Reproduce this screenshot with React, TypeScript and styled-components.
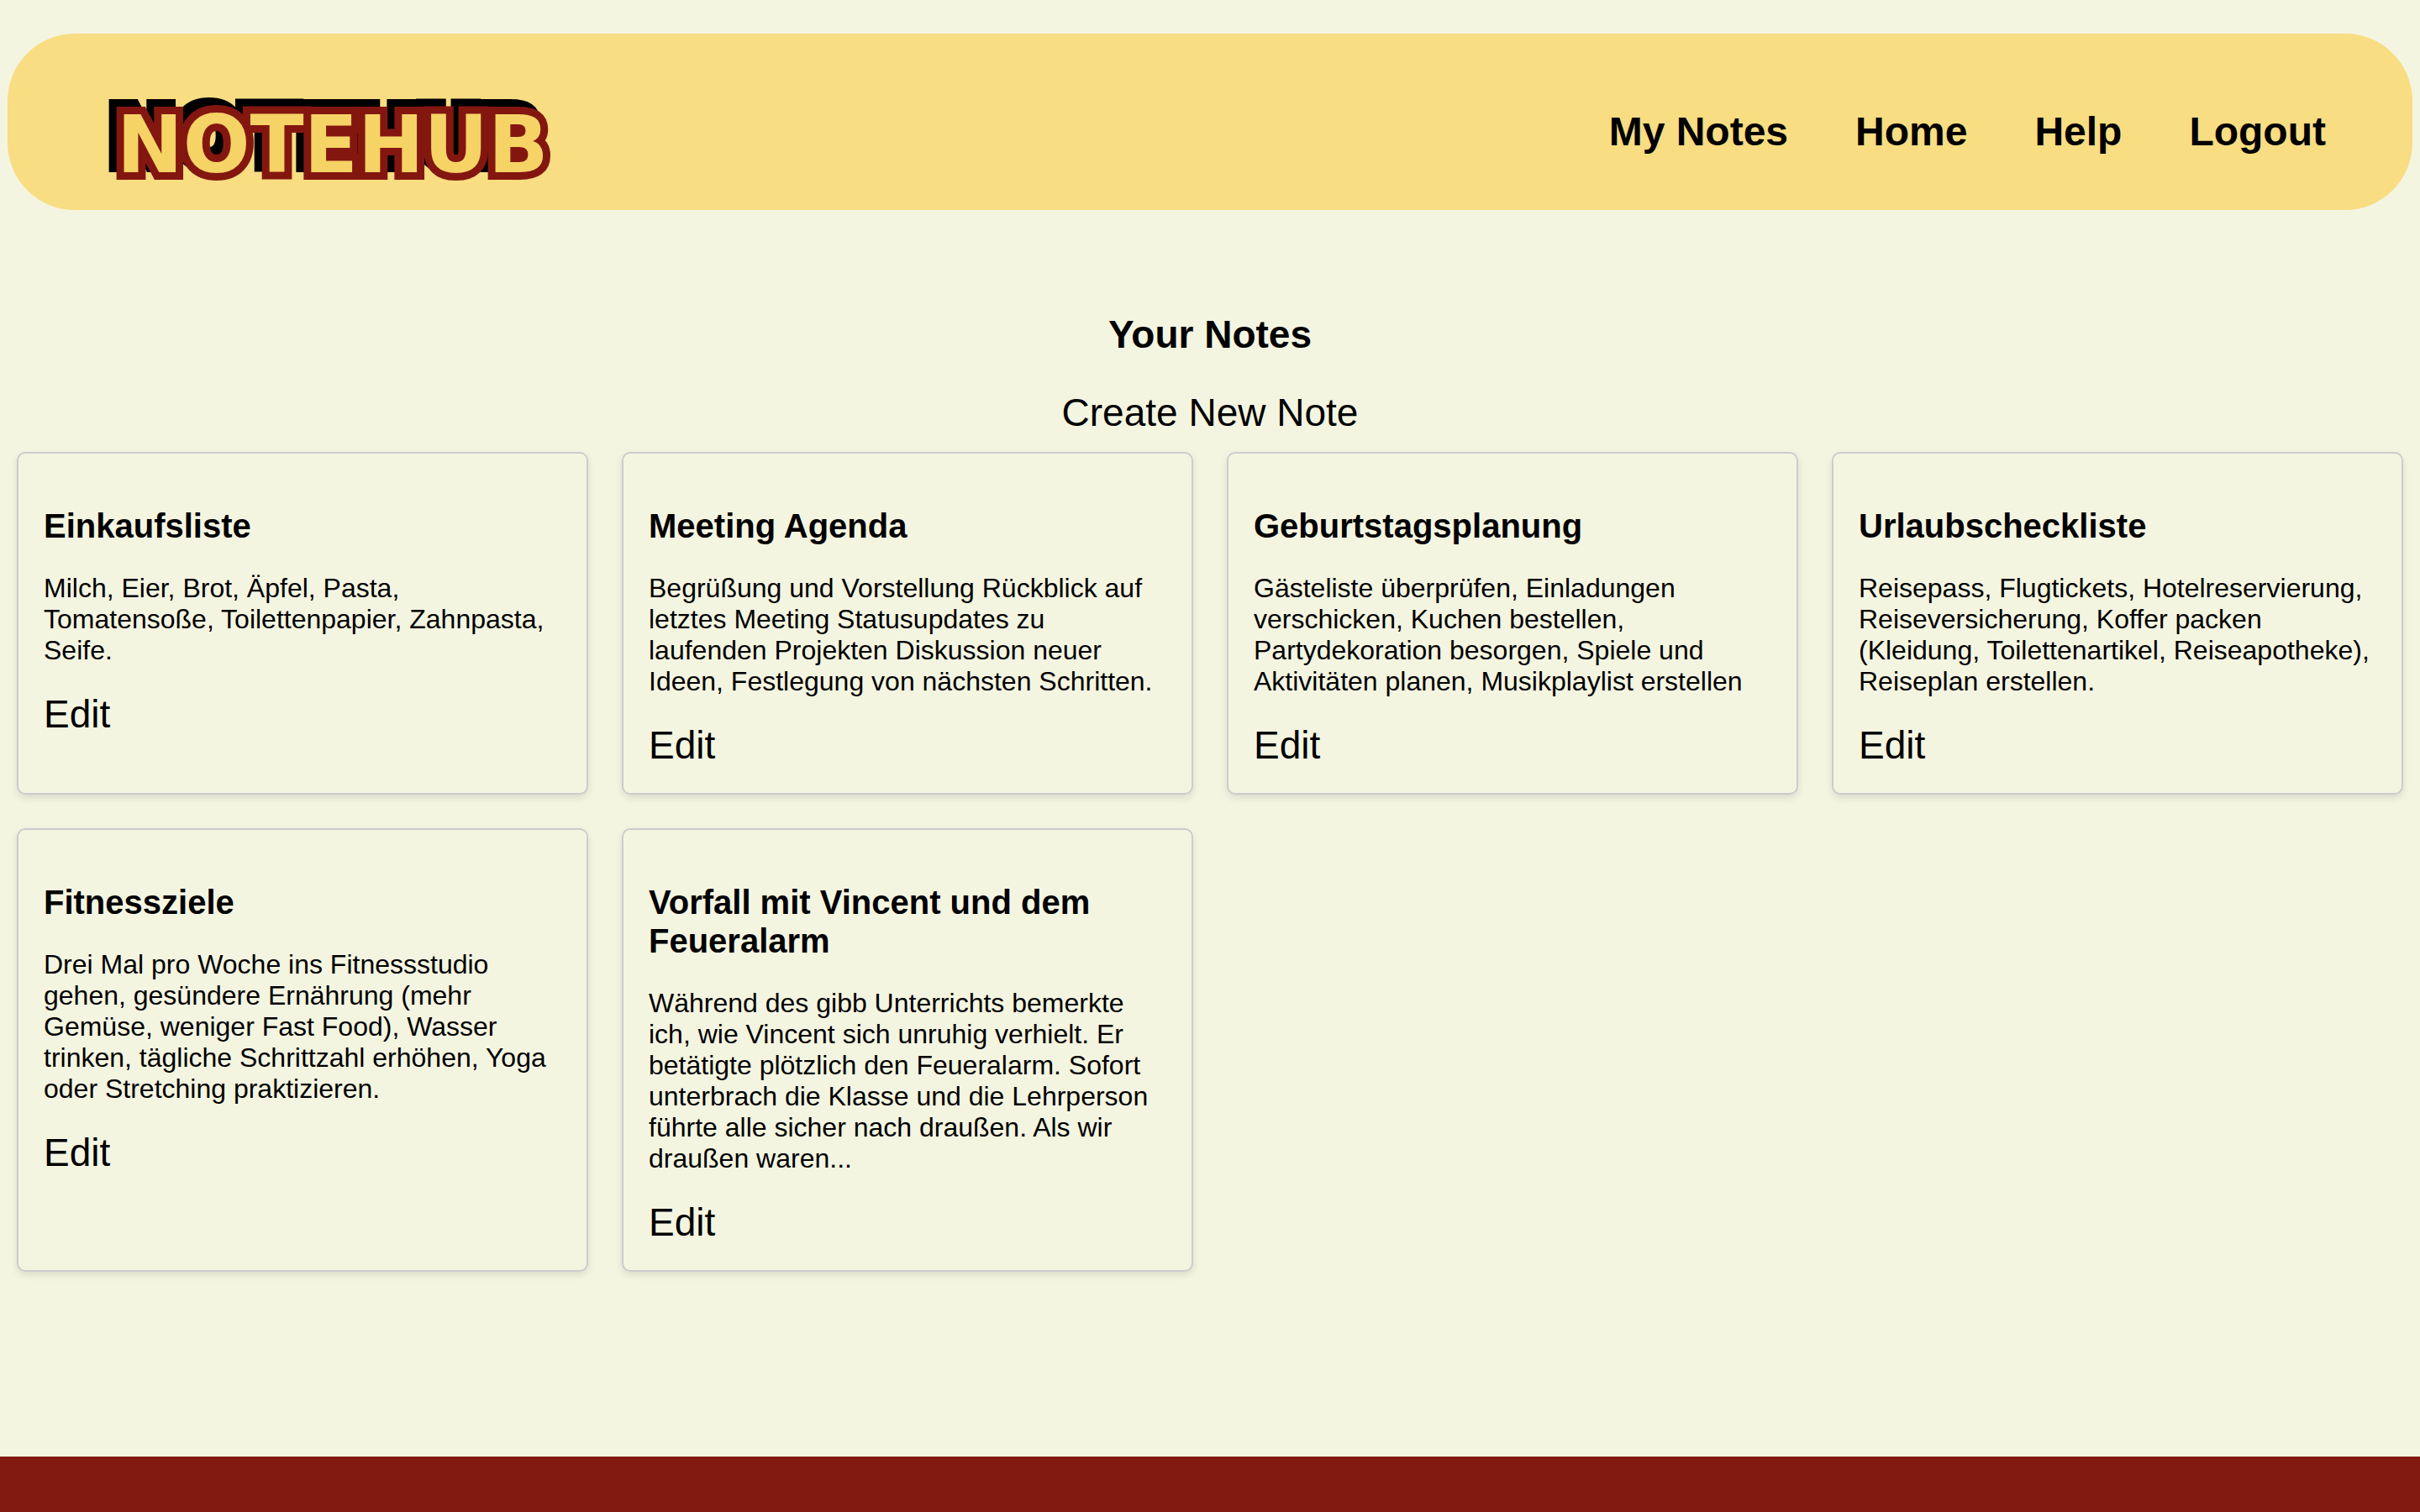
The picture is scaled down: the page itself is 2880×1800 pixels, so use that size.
import React from "react";
import styled, { createGlobalStyle } from "styled-components";

const GlobalStyle = createGlobalStyle`
  *, *::before, *::after { box-sizing: border-box; }
  body {
    margin: 0;
    background: #f4f5e1;
    color: #000;
    font-family: "Liberation Sans", Helvetica, Arial, sans-serif;
  }
`;

const Page = styled.div`
  display: flex;
  flex-direction: column;
  min-height: 100vh;
`;

const Header = styled.header`
  display: flex;
  align-items: center;
  justify-content: space-between;
  margin: 40px 9px 0;
  padding: 62px 103px 38px 112px;
  border-radius: 80px;
  background: #f8dd82;
`;

const LogoLink = styled.a`
  display: block;
  line-height: 0;
`;

const Logo = styled.svg`
  display: block;
  width: 560px;
  height: 110px;
  overflow: visible;
  filter: drop-shadow(-9px -9px 0 #000);
`;

const LogoText = styled.text`
  font-family: "DejaVu Sans", Verdana, sans-serif;
  font-size: 94px;
  font-weight: 700;
  fill: #f6d365;
  stroke: #831710;
  stroke-width: 18px;
  stroke-linejoin: miter;
  stroke-miterlimit: 3;
  paint-order: stroke;
`;

const Nav = styled.nav`
  display: flex;
  gap: 80px;
`;

const NavLink = styled.a`
  color: inherit;
  font-size: 48px;
  font-weight: 700;
  line-height: 56px;
  text-decoration: none;
`;

const Main = styled.main`
  display: flex;
  flex-direction: column;
  align-items: center;
  padding: 122px 0 200px;
`;

const PageTitle = styled.h1`
  margin: 0 0 40px;
  font-size: 46px;
  line-height: 53px;
`;

const TextLink = styled.a`
  color: inherit;
  font-size: 46px;
  line-height: 53px;
  text-decoration: none;
`;

const NoteGrid = styled.section`
  display: grid;
  grid-template-columns: repeat(4, minmax(0, 1fr));
  gap: 40px;
  width: 100%;
  padding: 20px;
`;

const NoteCard = styled.article`
  display: flex;
  flex-direction: column;
  align-items: flex-start;
  padding: 63px 30px 30px;
  border: 2px solid #ccc;
  border-radius: 10px;
  box-shadow: 0 4px 8px rgba(0, 0, 0, 0.1);
`;

const NoteTitle = styled.h2`
  margin: 0 0 33px;
  font-size: 40px;
  line-height: 46px;
`;

const NoteText = styled.p`
  margin: 0 0 31px;
  font-size: 32px;
  line-height: 37px;
`;

const Footer = styled.footer`
  flex: 1;
  min-height: 60px;
  background: #831a12;
`;

const links = ["My Notes", "Home", "Help", "Logout"];

const notes = [
  {
    title: "Einkaufsliste",
    text: "Milch, Eier, Brot, Äpfel, Pasta, Tomatensoße, Toilettenpapier, Zahnpasta, Seife.",
  },
  {
    title: "Meeting Agenda",
    text: "Begrüßung und Vorstellung Rückblick auf letztes Meeting Statusupdates zu laufenden Projekten Diskussion neuer Ideen, Festlegung von nächsten Schritten.",
  },
  {
    title: "Geburtstagsplanung",
    text: "Gästeliste überprüfen, Einladungen verschicken, Kuchen bestellen, Partydekoration besorgen, Spiele und Aktivitäten planen, Musikplaylist erstellen",
  },
  {
    title: "Urlaubscheckliste",
    text: "Reisepass, Flugtickets, Hotelreservierung, Reiseversicherung, Koffer packen (Kleidung, Toilettenartikel, Reiseapotheke), Reiseplan erstellen.",
  },
  {
    title: "Fitnessziele",
    text: "Drei Mal pro Woche ins Fitnessstudio gehen, gesündere Ernährung (mehr Gemüse, weniger Fast Food), Wasser trinken, tägliche Schrittzahl erhöhen, Yoga oder Stretching praktizieren.",
  },
  {
    title: "Vorfall mit Vincent und dem Feueralarm",
    text: "Während des gibb Unterrichts bemerkte ich, wie Vincent sich unruhig verhielt. Er betätigte plötzlich den Feueralarm. Sofort unterbrach die Klasse und die Lehrperson führte alle sicher nach draußen. Als wir draußen waren...",
  },
];

export default function App() {
  return (
    <>
      <GlobalStyle />
      <Page>
        <Header>
          <LogoLink href="#">
            <Logo viewBox="0 0 560 110" role="img" aria-label="NOTEHUB">
              <LogoText x="18" y="103">
                NOTEHUB
              </LogoText>
            </Logo>
          </LogoLink>
          <Nav>
            {links.map((label) => (
              <NavLink key={label} href="#">
                {label}
              </NavLink>
            ))}
          </Nav>
        </Header>
        <Main>
          <PageTitle>Your Notes</PageTitle>
          <TextLink href="#">Create New Note</TextLink>
          <NoteGrid>
            {notes.map((note) => (
              <NoteCard key={note.title}>
                <NoteTitle>{note.title}</NoteTitle>
                <NoteText>{note.text}</NoteText>
                <TextLink href="#">Edit</TextLink>
              </NoteCard>
            ))}
          </NoteGrid>
        </Main>
        <Footer />
      </Page>
    </>
  );
}
